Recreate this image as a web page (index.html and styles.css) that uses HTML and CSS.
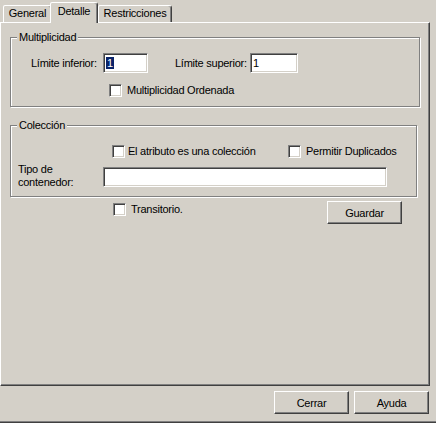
FILE: index.html
```html
<!DOCTYPE html>
<html lang="es">
<head>
<meta charset="utf-8">
<title>Detalle</title>
<link rel="stylesheet" href="styles.css">
</head>
<body>
<div class="dialog">
  <div class="tabs">
    <div class="tab tab-general">General</div>
    <div class="tab tab-detalle active">Detalle</div>
    <div class="tab tab-restr">Restricciones</div>
  </div>
  <div class="panel">
    <div class="group group-mult">
      <div class="group-title">Multiplicidad</div>
      <div class="row limits">
        <span class="lbl lbl-inf">Límite inferior:</span>
        <span class="field field-inf"><span class="sel">1</span></span>
        <span class="lbl lbl-sup">Límite superior:</span>
        <span class="field field-sup">1</span>
      </div>
      <div class="row check-row ordenada">
        <span class="check"></span><span class="check-text gap5">Multiplicidad Ordenada</span>
      </div>
    </div>
    <div class="group group-col">
      <div class="group-title">Colección</div>
      <div class="row check-row coleccion">
        <span class="check-item item-col"><span class="check"></span><span class="check-text gap3">El atributo es una colección</span></span>
        <span class="check-item"><span class="check"></span><span class="check-text gap5">Permitir Duplicados</span></span>
      </div>
      <div class="row tipo">
        <span class="lbl lbl-tipo">Tipo de<br>contenedor:</span>
        <span class="field field-tipo"></span>
      </div>
    </div>
    <div class="row transit">
      <span class="check"></span><span class="check-text gap5">Transitorio.</span>
      <button class="btn btn-guardar">Guardar</button>
    </div>
  </div>
  <div class="footer">
    <button class="btn">Cerrar</button>
    <button class="btn">Ayuda</button>
  </div>
</div>
</body>
</html>
```
FILE: styles.css
```css
html, body {
  margin: 0;
  padding: 0;
  background: #d4d0c8;
}
body {
  font-family: "Liberation Sans", Arial, sans-serif;
  font-size: 11px;
  letter-spacing: -0.25px;
  color: #000;
  line-height: 13px;
}
.dialog {
  width: 436px;
  height: 423px;
  box-sizing: border-box;
  border-bottom: 1px solid #404040;
  box-shadow: inset 0 -1px 0 #808080;
  display: flex;
  flex-direction: column;
}
/* Tabs */
.tabs {
  display: flex;
  align-items: flex-end;
  height: 22px;
  padding-left: 3px;
}
.tab {
  box-sizing: border-box;
  height: 17px;
  border-style: solid;
  border-width: 1px 1px 0 1px;
  border-color: #fff #404040 transparent #fff;
  border-radius: 2px 3px 0 0;
  box-shadow: inset -1px 0 0 #808080;
  text-align: center;
  line-height: 15px;
  background: #d4d0c8;
  white-space: nowrap;
}
.tab-general { width: 49px; }
.tab-detalle { width: 48px; margin-left: -2px; }
.tab-restr { width: 74px; }
.tab.active {
  position: relative;
  z-index: 1;
  height: 21px;
  margin-bottom: -1px;
  padding-top: 1px;
}
/* Panel */
.panel {
  box-sizing: border-box;
  width: 430px;
  height: 364px;
  border-style: solid;
  border-width: 1px;
  border-color: #fff #404040 #404040 #fff;
  box-shadow: inset -1px -1px 0 #808080;
}
.group {
  box-sizing: border-box;
  margin-left: 9px;
  border: 1px solid #808080;
  box-shadow: inset 1px 1px 0 #fff, 1px 1px 0 #fff;
}
.group-mult {
  margin-top: 14px;
  width: 410px;
  height: 70px;
}
.group-col {
  margin-top: 18px;
  width: 407px;
  height: 72px;
}
.group-title {
  display: table;
  margin: -7px 0 0 6px;
  padding: 0 2px;
  line-height: 13px;
  background: #d4d0c8;
}
.row {
  display: flex;
  align-items: center;
  white-space: nowrap;
}
.lbl { flex: none; }
.limits {
  margin-top: 9px;
  height: 20px;
}
.lbl-inf {
  margin-left: 20px;
  width: 72px;
}
.lbl-sup {
  margin-left: 27px;
  width: 75px;
}
.field {
  flex: none;
  box-sizing: border-box;
  height: 20px;
  border: 1px solid;
  border-color: #808080 #fff #fff #808080;
  box-shadow: inset 1px 1px 0 #404040, inset -1px -1px 0 #d4d0c8;
  background: #fff;
  padding-left: 2px;
  line-height: 16px;
  padding-top: 1px;
}
.field-inf { width: 45px; }
.field-sup { width: 48px; }
.sel {
  background: #0a246a;
  color: #fff;
  padding: 0 1px;
}
.check {
  flex: none;
  box-sizing: border-box;
  width: 13px;
  height: 13px;
  border: 1px solid;
  border-color: #808080 #fff #fff #808080;
  box-shadow: inset 1px 1px 0 #404040, inset -1px -1px 0 #d4d0c8;
  background: #fff;
}
.gap3 { margin-left: 3px; }
.gap5 { margin-left: 5px; }
.ordenada {
  margin-top: 11px;
  margin-left: 98px;
}
.coleccion {
  margin-top: 13px;
  margin-left: 101px;
}
.check-item {
  display: flex;
  align-items: center;
  flex: none;
}
.item-col { width: 176px; }
.tipo {
  margin-top: 3px;
  align-items: flex-start;
}
.lbl-tipo {
  margin-left: 7px;
  margin-top: 2px;
  width: 85px;
}
.field-tipo {
  width: 284px;
  margin-top: 6px;
}
.transit {
  margin-top: 4px;
  align-items: flex-start;
}
.transit .check {
  margin-top: 2px;
  margin-left: 112px;
}
.transit .check-text {
  margin-top: 2px;
}
.btn {
  box-sizing: border-box;
  width: 75px;
  height: 23px;
  padding: 0;
  margin: 0;
  border: 1px solid;
  border-color: #fff #404040 #404040 #fff;
  box-shadow: inset -1px -1px 0 #808080;
  background: #d4d0c8;
  font-family: "Liberation Sans", Arial, sans-serif;
  font-size: 11px;
  letter-spacing: -0.25px;
  color: #000;
  border-radius: 0;
}
.btn-guardar {
  margin-left: auto;
  margin-right: 27px;
}
.footer {
  display: flex;
  justify-content: flex-end;
  gap: 5px;
  padding-top: 5px;
  padding-right: 7px;
}
```
